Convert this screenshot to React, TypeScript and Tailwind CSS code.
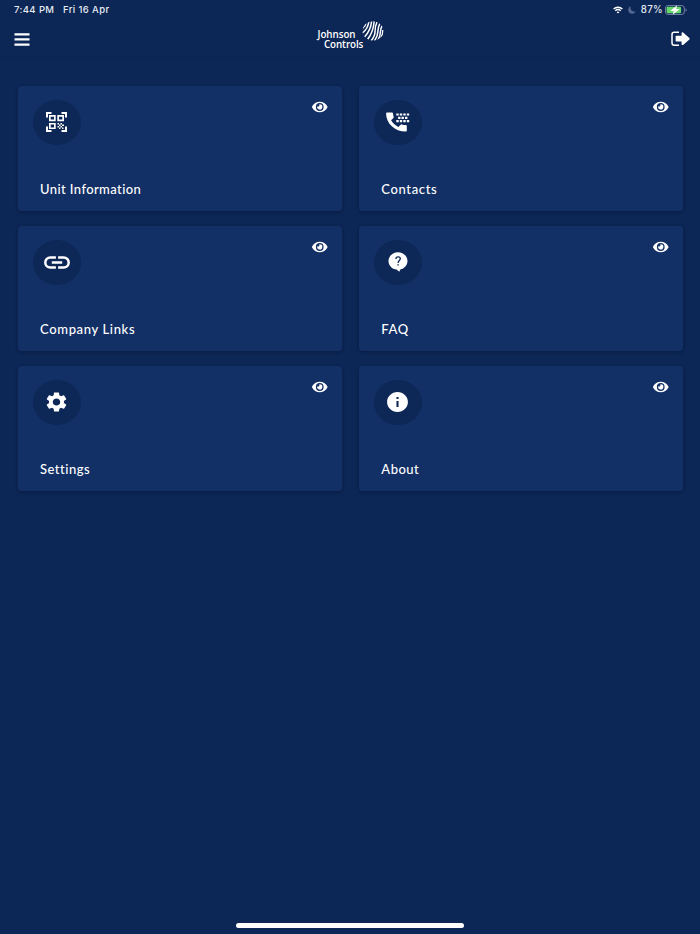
import type { ReactNode } from 'react';
import { FaEye } from 'react-icons/fa';
import { MdInfo, MdSettings } from 'react-icons/md';

const QrIcon = () => (
  <svg width="21" height="20" viewBox="0 0 42 40" preserveAspectRatio="none" fill="none" stroke="currentColor">
    <path strokeWidth="4" d="M2 11V2h9M31 2h9v9M2 29v9h9M31 38h9v-9" />
    <path strokeWidth="3.400" d="M7.700 7.700h10v9h-10zM24.300 7.700h10v9h-10zM7.700 23.500h10v9h-10z" />
    <path
      fill="currentColor"
      stroke="none"
      d="M23 22h3v3h-3zM29 22h3v3h-3zM26 25h3v3h-3zM32 25h4v3h-4zM23 28h3v3h-3zM29 28h3v3h-3zM26 31h3v3h-3zM32 31h3v3h-3z"
    />
  </svg>
);

const PhoneIcon = () => (
  <svg width="24" height="20" viewBox="0 0 24 20" fill="currentColor">
    <path d="M1 .4h4.900c.6 0 1 .4 1.100.9.100 1.300.3 2.500.7 3.700.1.400 0 .8-.3 1.100L5.100 8.300c1.600 3 4.100 5.100 7.200 6.600l2.400-2.200c.3-.3.7-.4 1.100-.3 1.200.4 2.500.6 3.800.6.700 0 1.200.5 1.200 1.100v4.500c0 .6-.5 1-1.200 1C8.900 19.600.100 11.400.100 1.400.100.800.400.400 1 .4z" />
    <path d="M10.300 1.400h2.400v2.200h-2.400zM13.800 1.400h2.400v2.200h-2.400zM17.300 1.400h2.400v2.200h-2.400zM20.800 1.400h2.400v2.200h-2.400zM12.100 4.700h2.400v2.200h-2.400zM15.500 4.700h2.400v2.200h-2.400zM19 4.700h2.400v2.200h-2.400zM10.300 8h2.400v2.200h-2.400zM13.800 8h2.400v2.200h-2.400zM17.300 8h2.400v2.200h-2.400zM20.800 8h2.400v2.200h-2.400z" />
  </svg>
);

const LinkIcon = () => (
  <svg width="26" height="13" viewBox="0 0 26 13" fill="none" stroke="currentColor" strokeWidth="2.500">
    <path d="M11.900 1.500H6.300a5 5 0 0 0 0 10h5.600M14.100 1.500h5.600a5 5 0 0 1 0 10h-5.600M7.800 6.500h10.400" />
  </svg>
);

const QuestionIcon = () => (
  <svg width="20" height="20" viewBox="0 0 20 20">
    <path
      fill="currentColor"
      d="M10 .3c5.200 0 9.500 3.900 9.500 8.700 0 4.200-3.200 7.600-7.200 8.500l-1.100 2.200-2.600-2.100C4 17.200.500 13.500.500 9 .500 4.200 4.800.300 10 .3z"
    />
    <path
      fill="none"
      stroke="#0c2655"
      strokeWidth="1.300"
      d="M7.900 6.900c0-1.300.9-2 2.200-2s2.200.8 2.200 1.900c0 1.700-2.200 1.900-2.200 4.100"
    />
    <path fill="#0c2655" d="M9.400 12.200h1.400v1.400H9.400z" />
  </svg>
);

const LogoutIcon = () => (
  <svg width="19" height="16" viewBox="0 0 19 16">
    <path fill="none" stroke="currentColor" strokeWidth="1.500" d="M8 1.300H3.300Q1 1.300 1 3.400v8.700q0 2.200 2.300 2.200H8" />
    <path
      fill="currentColor"
      d="M5.400 4.700h5.200V2.100c0-.8.9-1.200 1.500-.6l6.300 5.600c.4.400.4.900 0 1.300l-6.300 5.500c-.6.500-1.500.1-1.500-.7v-2.600H5.400c-.5 0-.8-.3-.8-.8V5.500c0-.5.3-.8.800-.8z"
    />
  </svg>
);

const TILES: { title: string; icon: ReactNode; tracking: string }[] = [
  { title: 'Unit Information', icon: <QrIcon />, tracking: 'tracking-[0.400px]' },
  { title: 'Contacts', icon: <PhoneIcon />, tracking: 'tracking-[0.650px]' },
  { title: 'Company Links', icon: <LinkIcon />, tracking: 'tracking-[0.650px]' },
  { title: 'FAQ', icon: <QuestionIcon />, tracking: 'tracking-[0.650px]' },
  {
    title: 'Settings',
    icon: <MdSettings className="h-[24px] w-[25px]" preserveAspectRatio="none" />,
    tracking: 'tracking-[0.500px]',
  },
  {
    title: 'About',
    icon: <MdInfo className="h-[24px] w-[25px]" preserveAspectRatio="none" />,
    tracking: 'tracking-[0.500px]',
  },
];

function StatusBar() {
  return (
    <div className="flex h-[20px] items-center justify-between pl-[14px] pr-[13px] font-['Inter',sans-serif] text-[9.500px] font-medium text-[#e6eaf2]">
      <div className="flex gap-[8.500px] tracking-[0.380px]">
        <span>7:44 PM</span>
        <span>Fri 16 Apr</span>
      </div>
      <div className="flex items-center">
        <svg width="10" height="8" viewBox="0 0 10 8" fill="none" stroke="#fff" strokeWidth="1.400">
          <path d="M.6 2.900c2.500-2.300 6.300-2.300 8.800 0M2.300 4.800c1.500-1.400 3.900-1.400 5.400 0" />
          <path fill="#fff" stroke="none" d="M3.500 6.100c.9-.8 2.100-.8 3 0L5 7.600z" />
        </svg>
        <svg className="ml-[5px]" width="8" height="8" viewBox="0 0 8 8" fill="#536790">
          <path d="M2.500.3C1.900 3.600 4 6 7.700 5.500 6.700 7.200 5.500 7.800 4 7.800 1.900 7.800.2 6.200.2 4 .2 2.300 1.100.9 2.500.3z" />
        </svg>
        <span className="ml-[5px] text-[9.700px] tracking-[0.300px]">87%</span>
        <svg className="ml-[2px]" width="22" height="10" viewBox="0 0 22 10">
          <rect x=".5" y=".6" width="18.800" height="8.800" rx="2.400" fill="none" stroke="#7283a3" />
          <rect x="1.600" y="1.700" width="14.500" height="6.600" rx="1.300" fill="#66d96c" />
          <path d="M20.500 3.400q1.200.4 1.200 1.600t-1.200 1.600z" fill="#7283a3" />
          <path d="M12.200.2 5.200 6h3.700L7.700 9.800l7.200-5.700h-3.800z" fill="#fff" />
        </svg>
      </div>
    </div>
  );
}

function Logo() {
  return (
    <div className="flex h-[29px] w-[66px] items-start">
      <div className="w-[44px] shrink-0 whitespace-nowrap pt-[9px] font-['Open_Sans',sans-serif] text-[9.800px] font-semibold leading-[9.500px]">
        <div className="tracking-[-0.050px]">Johnson</div>
        <div className="pl-[6.500px] tracking-[-0.100px]">Controls</div>
      </div>
      <svg className="shrink-0" width="22" height="20" viewBox="0 0 22 20">
        <defs>
          <clipPath id="globe">
            <ellipse cx="11" cy="10" rx="10.700" ry="9.700" />
          </clipPath>
        </defs>
        <g clipPath="url(#globe)" fill="none" stroke="#fff" strokeWidth="1.500">
          <path d="M0 8Q3.500 5 4.500 1M0 12.500Q6 8 7 0M2.500 16Q9 9 9.600 0M5.500 18.500Q11.500 11 12.200 0M9 20Q13 15 13 11Q13 5 15 1M12.500 20Q15.800 15 15.800 11Q16 6 18 2M16 19Q18.400 15 18.400 11Q18.500 7.500 20.300 4.500M19 17Q20.900 14 20.900 9" />
        </g>
      </svg>
    </div>
  );
}

function Header() {
  return (
    <header className="flex h-[38px] items-center justify-between border-b border-[#0a2350] pl-[14px] pr-[10px]">
      <svg className="mt-[1px]" width="16" height="13" viewBox="0 0 16 13" fill="#fff">
        <path d="M.5.200h15v2.200H.500zM.500 5.300h15v2.200H.500zM.500 10.500h15v2.200H.500z" />
      </svg>
      <div className="-mt-[6px]">
        <Logo />
      </div>
      <LogoutIcon />
    </header>
  );
}

function Tile({ title, icon, tracking }: { title: string; icon: ReactNode; tracking: string }) {
  return (
    <div className="flex flex-col justify-between rounded-[3px] bg-[#122f66] pb-[14px] pl-[15px] pr-[14.500px] pt-[13.500px] shadow-[0_1px_3px_rgba(3,15,42,0.45)]">
      <div className="flex items-start justify-between">
        <div className="-ml-[0.500px] flex h-[45px] w-[48px] items-center justify-center rounded-[50%] bg-[#0d2757]">
          {icon}
        </div>
        <FaEye className="h-[14px] w-[15.500px]" preserveAspectRatio="none" />
      </div>
      <div
        className={`pl-[7px] font-['Lato',sans-serif] text-[13px] font-medium leading-[16px] ${tracking}`}
      >
        {title}
      </div>
    </div>
  );
}

export default function App() {
  return (
    <div className="flex h-[934px] w-[700px] flex-col bg-[#0c2655] text-white">
      <StatusBar />
      <Header />
      <main className="grid flex-1 auto-rows-[124.500px] grid-cols-[324px_324px] content-start gap-x-[17.300px] gap-y-[15.500px] pl-[18px] pt-[28.200px]">
        {TILES.map((tile) => (
          <Tile key={tile.title} {...tile} />
        ))}
      </main>
      <div className="mb-[6px] ml-[236px] h-[5px] w-[228px] rounded-full bg-white" />
    </div>
  );
}
